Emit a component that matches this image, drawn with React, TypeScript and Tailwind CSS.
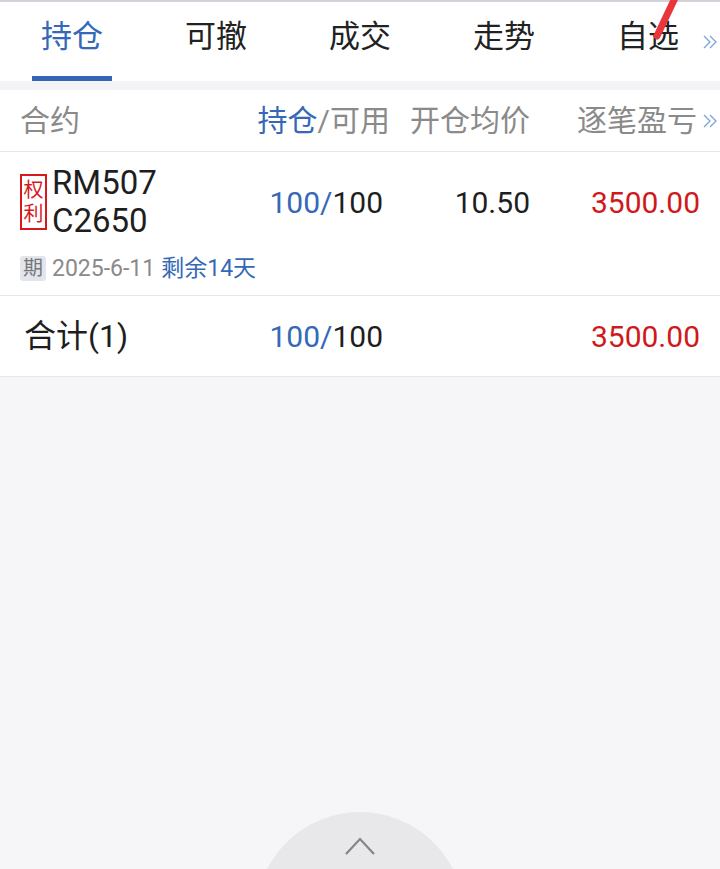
const TABS = ["持仓", "可撤", "成交", "走势", "自选"];

const FONT = "font-['Roboto','Noto_Sans_CJK_SC',sans-serif]";
const COLS = "grid grid-cols-[220px_143px_147px_170px] items-center px-[20px]";

function DoubleChevron({ className = "" }: { className?: string }) {
  return (
    <svg width="16" height="16" viewBox="0 0 16 16" className={className}>
      <path d="M2 2 L8 8 L2 14 M8 2 L14 8 L8 14" fill="none" stroke="#7da2d8" strokeWidth="1.3" />
    </svg>
  );
}

export default function App() {
  return (
    <div className={`relative h-[869px] w-[720px] overflow-hidden bg-[#f6f6f8] ${FONT}`}>
      <div className="h-[2px] bg-[#d2d3da]" />

      {/* tabs */}
      <div className="relative flex h-[79px] bg-white">
        {TABS.map((t, i) => (
          <div key={t} className="relative flex w-[144px] justify-center">
            <span
              className={`mt-[17px] text-[31px] leading-[36px] ${
                i === 0 ? "text-[#3568b7]" : "text-[#222]"
              }`}
            >
              {t}
            </span>
            {i === 0 && (
              <div className="absolute bottom-0 left-[32px] h-[5px] w-[80px] bg-[#3566b6]" />
            )}
          </div>
        ))}
        <DoubleChevron className="absolute right-[2px] top-[32px]" />
      </div>

      <div className="h-[9px] bg-[#f4f4f6]" />

      {/* header */}
      <div className={`${COLS} relative h-[62px] border-b border-[#e6e6e8] bg-white text-[30px] text-[#8a8a8a]`}>
        <span>合约</span>
        <span className="-mr-[7px] text-right">
          <span className="text-[#3568b7]">持仓</span>/可用
        </span>
        <span className="text-right">开仓均价</span>
        <span className="pr-[3px] text-right">逐笔盈亏</span>
        <DoubleChevron className="absolute right-[2px] top-[23px]" />
      </div>

      {/* position row */}
      <div className="border-b border-[#e6e6e8] bg-white pt-[12px] pb-[14px]">
        <div className={`${COLS} text-[30px]`}>
          <div className="flex items-center">
            <div className="flex h-[56px] w-[27px] flex-col items-center justify-center border-2 border-[#d6191c] text-[20px] leading-[24px] text-[#d6191c]">
              <span>权</span>
              <span>利</span>
            </div>
            <div className="ml-[5px] text-[33px] leading-[38px] text-[#1e1e1e]">
              <div>RM507</div>
              <div>C2650</div>
            </div>
          </div>
          <span className="text-right">
            <span className="text-[#3568b7]">100/</span>
            <span className="text-[#1e1e1e]">100</span>
          </span>
          <span className="text-right text-[#1e1e1e]">10.50</span>
          <span className="text-right text-[#d0191b]">3500.00</span>
        </div>
        <div className="mt-[16px] flex items-center px-[20px] text-[23px] leading-[25px]">
          <span className="flex h-[25px] w-[26px] items-center justify-center rounded-[3px] bg-[#e2e5ed] text-[20px] text-[#777]">
            期
          </span>
          <span className="ml-[6px] text-[#8a8a8a]">2025-6-11</span>
          <span className="ml-[6px] text-[#3568b7]">剩余14天</span>
        </div>
      </div>

      {/* total row */}
      <div className={`${COLS} h-[81px] border-b border-[#e6e6e8] bg-white text-[30px]`}>
        <span className="pl-[4px] text-[32px] text-[#1e1e1e]">合计(1)</span>
        <span className="text-right">
          <span className="text-[#3568b7]">100/</span>
          <span className="text-[#1e1e1e]">100</span>
        </span>
        <span />
        <span className="text-right text-[#d0191b]">3500.00</span>
      </div>

      {/* floating collapse button */}
      <div className="absolute left-[256px] top-[812px] flex h-[208px] w-[208px] justify-center rounded-full bg-[#e8e8ea]">
        <svg width="32" height="20" viewBox="0 0 32 20" className="mt-[24px]">
          <path d="M2 18 L16 3 L30 18" fill="none" stroke="#858585" strokeWidth="2.2" />
        </svg>
      </div>

      {/* red annotation stroke */}
      <svg width="40" height="44" viewBox="0 0 40 44" className="absolute left-[645px] top-0">
        <path d="M30 -2 L12 36" stroke="#e8363a" strokeWidth="7" strokeLinecap="round" />
      </svg>
    </div>
  );
}
